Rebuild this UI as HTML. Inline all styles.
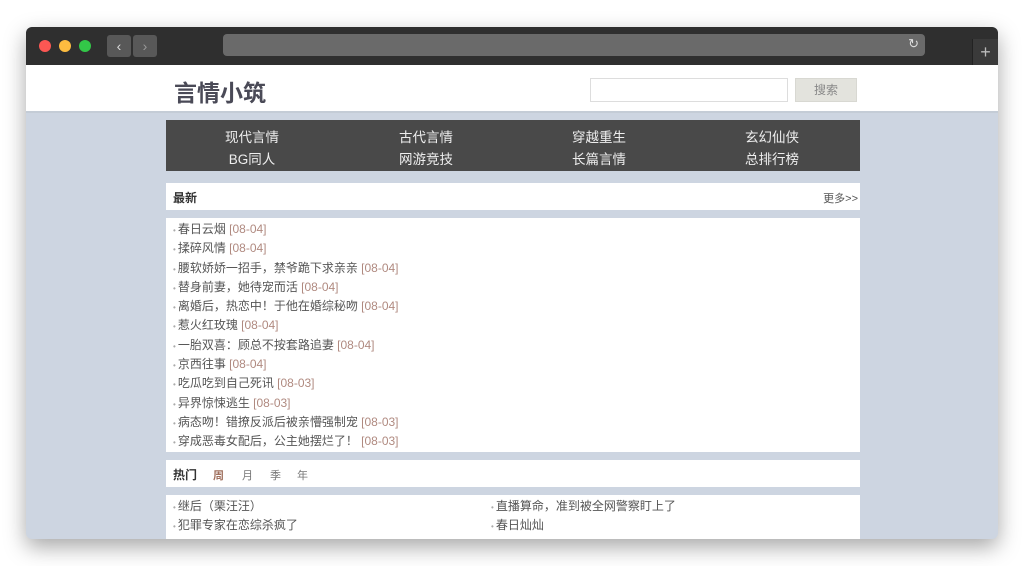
<!DOCTYPE html>
<html><head><meta charset="utf-8"><style>
*{margin:0;padding:0;box-sizing:border-box}
body{width:1024px;height:566px;background:#fff;font-family:"Liberation Sans","Noto Sans CJK SC",sans-serif;position:relative;overflow:hidden}
.win{position:absolute;left:26px;top:27px;width:972px;height:512px;border-radius:6px;overflow:hidden;box-shadow:0 8px 22px rgba(0,0,0,.35);background:#cdd5e1}
.bar{position:absolute;left:0;top:0;width:972px;height:38px;background:#2f2f2f}
.dot{position:absolute;top:13px;width:12px;height:12px;border-radius:50%}
.nb{position:absolute;top:8px;width:24px;height:22px;background:#585858;border-radius:3px;color:#ddd;font-size:14px;text-align:center;line-height:22px}
.url{position:absolute;left:197px;top:7px;width:702px;height:22px;background:#6a6a6a;border-radius:4px}
.plus{position:absolute;left:946px;top:12px;width:26px;height:26px;background:#3a3a3a;color:#bbb;font-size:18px;text-align:center;line-height:26px;border-left:1px solid #222}
.hdr{position:absolute;left:0;top:38px;width:972px;height:48px;background:#fff;border-bottom:2px solid #c4ccd6}
.logo{position:absolute;left:148px;top:9px;font-size:23px;font-weight:bold;color:#4a4a57}
.inp{position:absolute;left:564px;top:13px;width:198px;height:24px;border:1px solid #ddd}
.btn{position:absolute;left:769px;top:13px;width:62px;height:24px;background:#e3e3dd;border:1px solid #d8d8d2;color:#888;font-size:12px;text-align:center;line-height:22px}
.c{position:absolute;left:140px;width:694px;background:#fff}
.nav{top:93px;height:51px;background:#494949;color:#eee;font-size:13.5px}
.nav span{position:absolute;width:100px;text-align:center}
.t{font-size:12px;color:#333;font-weight:bold}
.li{font-size:12px;color:#555;padding-left:7px}
.li div{height:19.3px;line-height:19px;white-space:nowrap}
.li i{font-style:normal;color:#b08a80}
.li b{font-weight:normal;color:#aaa;font-size:8px;margin-right:2px}
</style></head><body>
<div class="win">
<div class="bar">
<div class="dot" style="left:13px;background:#fc5753"></div>
<div class="dot" style="left:33px;background:#fdbc40"></div>
<div class="dot" style="left:53px;background:#33c748"></div>
<div class="nb" style="left:81px">‹</div><div class="nb" style="left:107px;color:#999">›</div>
<div class="url"><span style="position:absolute;right:6px;top:2px;color:#ddd;font-size:13px">↻</span></div>
<div class="plus">+</div>
</div>
<div class="hdr"><div class="logo">言情小筑</div><div class="inp"></div><div class="btn">搜索</div></div>
<div class="c nav">
<span style="left:36px;top:6px">现代言情</span><span style="left:210px;top:6px">古代言情</span><span style="left:383px;top:6px">穿越重生</span><span style="left:556px;top:6px">玄幻仙侠</span>
<span style="left:36px;top:28px">BG同人</span><span style="left:210px;top:28px">网游竞技</span><span style="left:383px;top:28px">长篇言情</span><span style="left:556px;top:28px">总排行榜</span>
</div>
<div class="c" style="top:156px;height:27px"><span class="t" style="position:absolute;left:7px;top:6px">最新</span><span style="position:absolute;right:2px;top:7px;font-size:11px;color:#555">更多&gt;&gt;</span></div>
<div class="c li" style="top:191px;height:234px;padding-top:2px">
<div><b>•</b>春日云烟 <i>[08-04]</i></div>
<div><b>•</b>揉碎风情 <i>[08-04]</i></div>
<div><b>•</b>腰软娇娇一招手，禁爷跪下求亲亲 <i>[08-04]</i></div>
<div><b>•</b>替身前妻，她待宠而活 <i>[08-04]</i></div>
<div><b>•</b>离婚后，热恋中！于他在婚综秘吻 <i>[08-04]</i></div>
<div><b>•</b>惹火红玫瑰 <i>[08-04]</i></div>
<div><b>•</b>一胎双喜：顾总不按套路追妻 <i>[08-04]</i></div>
<div><b>•</b>京西往事 <i>[08-04]</i></div>
<div><b>•</b>吃瓜吃到自己死讯 <i>[08-03]</i></div>
<div><b>•</b>异界惊悚逃生 <i>[08-03]</i></div>
<div><b>•</b>病态吻！错撩反派后被亲懵强制宠 <i>[08-03]</i></div>
<div><b>•</b>穿成恶毒女配后，公主她摆烂了！ <i>[08-03]</i></div>
</div>
<div class="c" style="top:433px;height:27px;font-size:11px"><span class="t" style="position:absolute;left:7px;top:6px">热门</span><span style="position:absolute;left:47px;top:7px;color:#a0705e;font-weight:bold">周</span><span style="position:absolute;left:76px;top:7px;color:#777">月</span><span style="position:absolute;left:104px;top:7px;color:#777">季</span><span style="position:absolute;left:131px;top:7px;color:#777">年</span></div>
<div class="c li" style="top:468px;height:50px">
<div style="position:absolute;left:7px;top:2px;height:auto"><div><b>•</b>继后（栗汪汪）</div><div><b>•</b>犯罪专家在恋综杀疯了</div></div>
<div style="position:absolute;left:325px;top:2px;height:auto"><div><b>•</b>直播算命，准到被全网警察盯上了</div><div><b>•</b>春日灿灿</div></div>
</div>
</div>
</body></html>
